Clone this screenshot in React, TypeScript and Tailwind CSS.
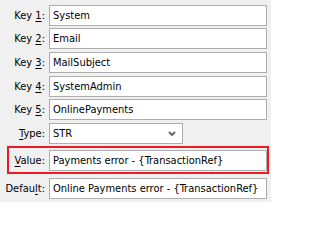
const font = { fontFamily: '"DejaVu Sans Condensed", "Liberation Sans", sans-serif' };

function Label({ pre, k, post }: { pre: string; k: string; post: string }) {
  return (
    <span className="w-[45px] shrink-0 text-right whitespace-nowrap text-black">
      {pre}
      <u className="underline-offset-[2px]">{k}</u>
      {post}
    </span>
  );
}

function Field({ value }: { value: string }) {
  return (
    <div className="flex-1 h-[21px] ml-[4px] bg-white border border-[#adadad] flex items-center pl-[3px] text-black whitespace-nowrap overflow-hidden">
      {value}
    </div>
  );
}

const keys = [
  { k: "1", v: "System", mt: "mt-0" },
  { k: "2", v: "Email", mt: "mt-[2px]" },
  { k: "3", v: "MailSubject", mt: "mt-[3px]" },
  { k: "4", v: "SystemAdmin", mt: "mt-[3px]" },
  { k: "5", v: "OnlinePayments", mt: "mt-[2px]" },
];

export default function App() {
  return (
    <div
      className="w-[271px] h-[202px] bg-[#f0f0f0] pt-[5px] pr-[4px] text-[11px] leading-none overflow-hidden"
      style={font}
    >
      {keys.map((r) => (
        <div key={r.k} className={`flex items-center ${r.mt}`}>
          <Label pre="Key " k={r.k} post=":" />
          <Field value={r.v} />
        </div>
      ))}

      <div className="flex items-center mt-[3px]">
        <Label pre="" k="T" post="ype:" />
        <div className="w-[134px] h-[21px] ml-[4px] bg-white border border-[#adadad] flex items-center justify-between pl-[3px] pr-[6px] text-black">
          <span>STR</span>
          <svg width="8" height="6" viewBox="0 0 8 6" className="mt-[1px]">
            <polyline points="1,1 4,4 7,1" fill="none" stroke="#606060" strokeWidth="1.8" />
          </svg>
        </div>
      </div>

      <div className="ml-[7px] mr-[-2px] mt-[2px] border-2 border-[#ec1c24] pt-[2px] pb-[1px] flex items-center">
        <span className="w-[36px] shrink-0 text-right whitespace-nowrap text-black">
          <u className="underline-offset-[2px]">V</u>alue:
        </span>
        <Field value="Payments error - {TransactionRef}" />
      </div>

      <div className="flex items-center mt-[4px]">
        <Label pre="Defau" k="l" post="t:" />
        <Field value="Online Payments error - {TransactionRef}" />
      </div>
    </div>
  );
}
